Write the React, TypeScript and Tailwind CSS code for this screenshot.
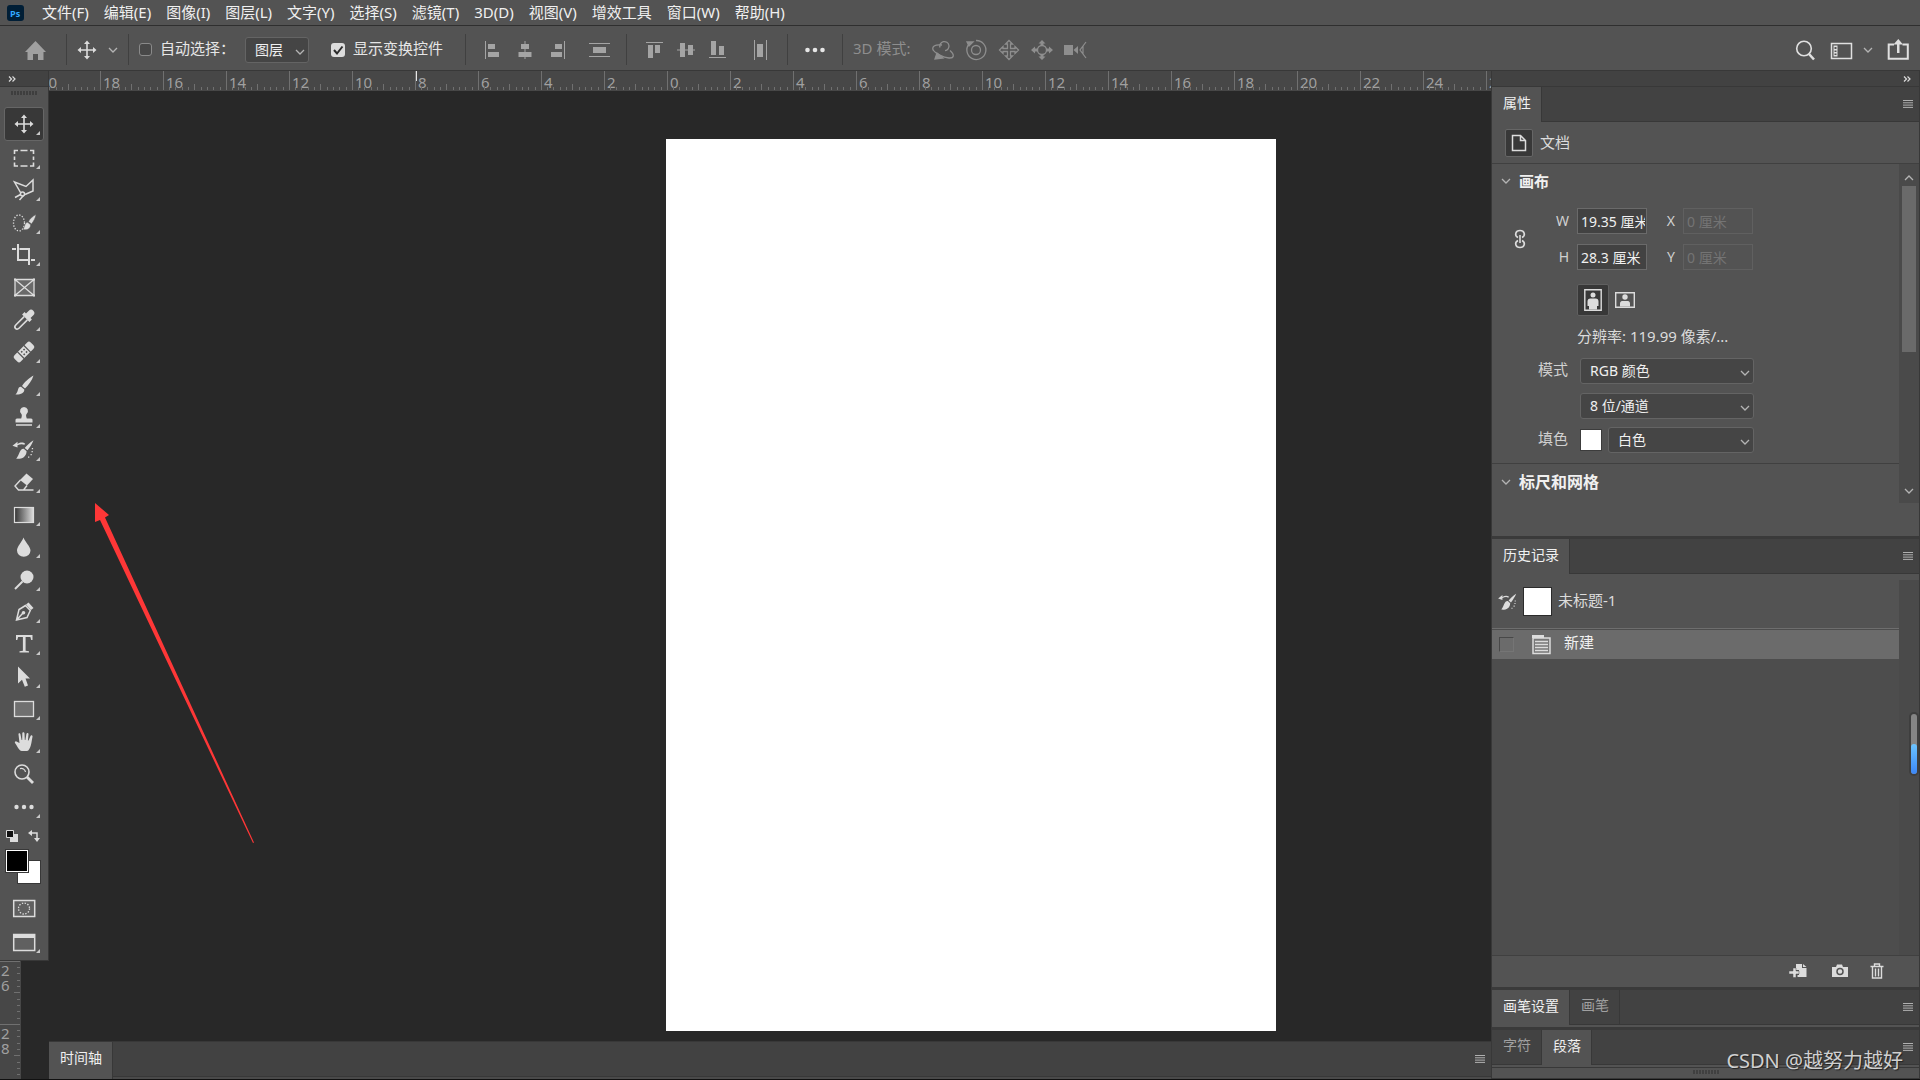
import type { ReactNode } from "react";

type Tool = { name: string; icon: ReactNode; more?: boolean };

const MENUS = [
  "文件(F)",
  "编辑(E)",
  "图像(I)",
  "图层(L)",
  "文字(Y)",
  "选择(S)",
  "滤镜(T)",
  "3D(D)",
  "视图(V)",
  "增效工具",
  "窗口(W)",
  "帮助(H)",
];

const TOP_MARKS = [20, 18, 16, 14, 12, 10, 8, 6, 4, 2, 0, 2, 4, 6, 8, 10, 12, 14, 16, 18, 20, 22, 24, 26];
const LEFT_MARKS = [26, 28];

const LIGHT = "#dcdcdc";

const moveShape = (
  <path
    d="M0-9.5 3-6H.8v5.2H6V-3L9.5 0 6 3V.8H.8V6H3L0 9.5-3 6h2.2V.8H-6V3L-9.5 0-6-3v2.2h5.2V-6H-3z"
    fill={LIGHT}
  />
);

const historyBrushShape = (
  <g fill={LIGHT}>
    <path d="M-11.5-4.2l5-4v2.1C-3.500-8-.5-7.800 1.200-6.200L.3-5.200C-1.500-6.300-4-6-6.500-4.700v2.100z" />
    <path d="M9.500-9.800C6-7.500 3-4.800.7-2l2.800 2.300C5.800-2.600 8-6 9.500-9.800zM-.2-1.200C-4.500-1.500-4 4-7.800 8.700-3 9.300 2.300 7.500 2.600 1.200z" />
    <path d="M7.500 1h1.300v1.300H7.500zM7.800-2h1.300v1.300H7.800zM6.500 4h1.300v1.300H6.500zM4 6.500h1.300v1.300H4z" />
  </g>
);

const TOOLS: Tool[] = [
  { name: "移动工具", more: true, icon: moveShape },
  {
    name: "矩形选框工具",
    more: true,
    icon: (
      <path
        d="M-9.500-4v-3.500H-6M-3.500-7.500h7M6-7.500h3.500V-4M9.500-1.500v3.500M9.500 4.500V8H6M3.500 8h-7M-6 8h-3.500V4.500M-9.500 2v-3.500"
        fill="none"
        stroke={LIGHT}
        strokeWidth="1.600"
      />
    ),
  },
  {
    name: "多边形套索工具",
    more: true,
    icon: (
      <g fill="none" stroke={LIGHT} strokeWidth="1.500">
        <path d="M-3.500 2.500-9.500-8 2-3.500 9-10v11L1 4.500M-9 7.500l5.500-3M-4.500 10l4-4.500" />
        <circle cx="-1.500" cy="4" r="2" />
      </g>
    ),
  },
  {
    name: "快速选择工具",
    more: true,
    icon: (
      <g>
        <ellipse cx="-5" cy="0" rx="5.500" ry="8" fill="none" stroke={LIGHT} strokeWidth="1.300" strokeDasharray="1.300 1.600" />
        <path
          d="M12-8.500c-3 1.500-6 4-7.500 7l3 2.500c2.200-3 4-6 4.500-9.500zM3.700-.7C.5-.5.800 4-1 6.500c4 1 7.500-.5 7.700-4.700z"
          fill={LIGHT}
          stroke="#535353"
          strokeWidth=".5"
        />
      </g>
    ),
  },
  {
    name: "裁剪工具",
    more: true,
    icon: <path d="M-6-11V5H4M7 5h4M-12-6h4M-4.500-6H5v16" fill="none" stroke={LIGHT} strokeWidth="2" />,
  },
  {
    name: "图框工具",
    icon: (
      <g stroke={LIGHT} strokeWidth="1.300" fill="#6a6a6a">
        <path d="M-9-7.500H10v16H-9zM-9-7.500 10 8.500M10-7.500-9 8.500" />
        <path d="M-10-8.500h2v2h-2zM9-8.500h2v2H9zM-10 7.500h2v2h-2zM9 7.500h2v2H9z" fill={LIGHT} stroke="none" />
      </g>
    ),
  },
  {
    name: "吸管工具",
    more: true,
    icon: (
      <g transform="rotate(45)">
        <path d="M-3.200-10a3.200 3.200 0 0 1 6.400 0V-6h2v3.500H-5.200V-6h2z" fill={LIGHT} />
        <path d="M-2.300-2.500V9C-2.300 13 2.300 13 2.300 9V-2.500" fill="none" stroke={LIGHT} strokeWidth="1.600" />
      </g>
    ),
  },
  {
    name: "污点修复画笔工具",
    more: true,
    icon: (
      <g transform="rotate(-45)">
        <rect x="-11.500" y="-4.500" width="23" height="9" rx="2.500" fill={LIGHT} />
        <path d="M-4.500-5V5M4.500-5V5" stroke="#535353" strokeWidth="1.200" />
        <path d="M-2.300-2.500h1.600v1.600h-1.600zM1-2.500h1.600v1.600H1zM-2.300 1h1.600v1.600h-1.600zM1 1h1.600v1.600H1z" fill="#535353" />
      </g>
    ),
  },
  {
    name: "画笔工具",
    more: true,
    icon: (
      <path
        d="M9.500-9.500C5-7 0-2.500-2 1l3 2.500C4.500 0 8-4.500 9.500-9.500zM-3 1.800C-7 1.800-5 6.500-8.500 9.500-3.500 9.800.5 8 .3 4.500z"
        fill={LIGHT}
      />
    ),
  },
  {
    name: "仿制图章工具",
    more: true,
    icon: (
      <path
        d="M0-10a4 4 0 0 1 2.600 7c-.8 1-.6 2 .2 4.500H7c1.200 0 1.500.8 1.500 1.800V5.500h-17V3.300c0-1 .5-1.800 1.500-1.800h4.200C-2-1-2-2-2.600-3A4 4 0 0 1 0-10zM-8 7.300H8V8.800H-8z"
        fill={LIGHT}
      />
    ),
  },
  { name: "历史记录画笔工具", more: true, icon: historyBrushShape },
  {
    name: "橡皮擦工具",
    more: true,
    icon: (
      <g>
        <path d="M2.500-8.500 9-3 3 3.500-4-2z" fill={LIGHT} />
        <path d="M-3.500-2-9 4l3.500 4h5L3 3.500M-5.500 8H9.500" fill="none" stroke={LIGHT} strokeWidth="1.400" />
      </g>
    ),
  },
  {
    name: "渐变工具",
    more: true,
    icon: (
      <g>
        <linearGradient id="gradient-tool">
          <stop offset="0" stopColor="#333" />
          <stop offset="1" stopColor="#ddd" />
        </linearGradient>
        <rect x="-9.500" y="-7.500" width="19" height="15" fill="url(#gradient-tool)" stroke={LIGHT} strokeWidth="1.200" />
      </g>
    ),
  },
  {
    name: "模糊工具",
    more: true,
    icon: <path d="M-.5-9.500C1-5 6.500-.5 6.500 3.500a6.700 6.200 0 0 1-13.500 0C-7-.5-2-5-.5-9.500z" fill={LIGHT} />,
  },
  {
    name: "减淡工具",
    more: true,
    icon: (
      <g>
        <circle cx="3" cy="-3" r="6.500" fill={LIGHT} />
        <path d="M-1.500 1.500-9 9" stroke={LIGHT} strokeWidth="2" />
      </g>
    ),
  },
  {
    name: "钢笔工具",
    more: true,
    icon: (
      <g>
        <path d="M4.500-9.500 9.500-4 7-2 2-7.500z" fill={LIGHT} />
        <path d="M1.500-6.500-5-2.500-7.500 8 3 5.500 6.300-1.500zM-7 7.500-1 1" fill="none" stroke={LIGHT} strokeWidth="1.500" />
        <circle cx="-.5" cy=".8" r="1.800" fill={LIGHT} />
      </g>
    ),
  },
  {
    name: "横排文字工具",
    more: true,
    icon: <path d="M-8-9H8.500v5H7.200L6.400-7H1.600V6.800l3.400.5V8.500H-4.500V7.300l3.400-.5V-7h-4.800l-.8 3H-8z" fill={LIGHT} />,
  },
  {
    name: "路径选择工具",
    more: true,
    icon: <path d="M-6-10.500 6 1.500H1.500L4 8.500.800 9.800-2 2.800l-4 3.700z" fill={LIGHT} />,
  },
  {
    name: "矩形工具",
    more: true,
    icon: <rect x="-9.500" y="-7.500" width="19" height="15" fill="#707070" stroke={LIGHT} strokeWidth="1.300" />,
  },
  {
    name: "抓手工具",
    more: true,
    icon: (
      <path
        d="M-4.500 1-5.500-7.500c-.2-1.500 1.700-1.600 2 0L-2.400-2h.6L-1.700-8.700c0-1.500 2.100-1.500 2.200 0L.8-2h.6l1-6c.3-1.400 2.200-1.200 2.100.2L3.900-1.400h.6L6.500-6c.6-1.200 2.300-.6 2 .8C7.500-1 7.500 5 4.500 8.200 3.500 9.300-2.500 9.500-4 8.200-6 6.500-7 3.500-9 1c-.7-1.500 1-2.500 2-1.300z"
        fill={LIGHT}
      />
    ),
  },
  {
    name: "缩放工具",
    icon: (
      <g fill="none" stroke={LIGHT}>
        <circle cx="-2" cy="-2" r="7" strokeWidth="1.600" />
        <path d="M-4-5.300C-1.500-6 1-5 1.500-2" strokeWidth="1.200" />
        <path d="M3 3l6 6" strokeWidth="2.800" />
      </g>
    ),
  },
  {
    name: "编辑工具栏",
    more: true,
    icon: (
      <g fill={LIGHT}>
        <circle cx="-7.500" cy="0" r="2.200" />
        <circle cx="0" cy="0" r="2.200" />
        <circle cx="7.500" cy="0" r="2.200" />
      </g>
    ),
  },
];

const ALIGN_X = [
  { name: "左对齐", d: "M-8-9h1V9h-1zM-5-6H2v5h-7zM-5 2H6v5H-5z" },
  { name: "水平居中对齐", d: "M-.5-9h1v3H4v5H.5v3H6.500v5H.5v2h-1V7h-6V2h6v-3H-4v-5h3.500z" },
  { name: "右对齐", d: "M7-9h1V9H7zM-2-6H5v5h-7zM-6 2H5v5H-6z" },
  { name: "水平分布", d: "M-10-7h21v1h-21zM-6-3H7v6H-6zM-10 6h21v1h-21z" },
];

const ALIGN_Y = [
  { name: "顶对齐", d: "M-8-8H9v1H-8zM-6-5h5V8h-5zM1-5h5v8H1z" },
  { name: "垂直居中对齐", d: "M-9-.5h3V-7h5v6.500h3V-5h5v4.500h2v1H7V5H2V.5h-3V7h-5V.5h-3z" },
  { name: "底对齐", d: "M-9 7H8v1H-9zM-7-9h5V5h-5zM1-4h5v9H1z" },
  { name: "垂直分布", d: "M-6-10h1v20h-1zM-3-6h6V7h-6zM6-10h1v20H6z" },
];

const MODES_3D = [
  {
    name: "环绕移动 3D 相机",
    icon: (
      <g fill="none" stroke="#8e8e8e" strokeWidth="1.300">
        <path d="M-3-2.500a4.600 4.600 0 1 1 5 3.200" />
        <path d="M-1-5C-8-6-12-3-9.500.5-7.500 3.500 0 7.500 6 8c5 .3 6-3 1-7.500" />
        <path d="M-8 9l2-6 6 5z" fill="#8e8e8e" />
      </g>
    ),
  },
  {
    name: "滚动 3D 相机",
    icon: (
      <g fill="none" stroke="#8e8e8e" strokeWidth="1.300">
        <circle cx="0" cy="0" r="4.500" />
        <path d="M-7-6A9.500 9.500 0 1 0 0-9.500" />
        <path d="M-9-8l6 0-4 4z" fill="#8e8e8e" />
      </g>
    ),
  },
  {
    name: "平移 3D 相机",
    icon: (
      <path
        d="M0-9.500 3.500-6H1.500v4.500H6v-2L9.500 0 6 3.500v-2H1.500V6h2L0 9.500-3.500 6h2V1.500H-6v2L-9.500 0-6-3.500v2h4.500V-6h-2z"
        fill="none"
        stroke="#8e8e8e"
        strokeWidth="1.300"
      />
    ),
  },
  {
    name: "滑动 3D 相机",
    icon: (
      <g>
        <circle cx="0" cy="0" r="4.500" fill="none" stroke="#8e8e8e" strokeWidth="1.300" />
        <path
          d="M0-10l3.500 3.500h-2V-4h-3v-2.500h-2zM0 10l3.500-3.500h-2V4h-3v2.500h-2zM-11 0l4-3.500v2h3v3h-3v2zM11 0 7-3.500v2H4v3h3v2z"
          fill="#8e8e8e"
        />
      </g>
    ),
  },
  {
    name: "变焦 3D 相机",
    icon: (
      <g>
        <path d="M-11-5h9V5h-9zM-1.500 0 3-4V4z" fill="#8e8e8e" />
        <path d="M11-8 5 0l6 8M8-4v8" fill="none" stroke="#8e8e8e" strokeWidth="1.200" />
      </g>
    ),
  },
];

const Chevron = ({ up }: { up?: boolean }) => (
  <svg className="h-2 w-3 shrink-0" viewBox="0 0 12 8" aria-hidden="true">
    <path d={up ? "M2 6l4-4 4 4" : "M2 2l4 4 4-4"} fill="none" stroke="#b4b4b4" strokeWidth="1.300" />
  </svg>
);

const Burger = () => (
  <button aria-label="面板菜单" className="ml-auto mr-[6px] self-center">
    <svg className="h-2 w-[10px]" viewBox="0 0 10 8" aria-hidden="true">
      <path d="M0 .5h10M0 2.800h10M0 5.100h10M0 7.400h10" stroke="#b0b0b0" />
    </svg>
  </button>
);

const Collapse = () => (
  <svg className="h-2 w-2" viewBox="0 0 8 8" aria-hidden="true">
    <path d="M1 1.500 3.500 4 1 6.500M4.500 1.500 7 4 4.500 6.500" fill="none" stroke="#dcdcdc" strokeWidth="1.200" />
  </svg>
);

const Divider = () => <span className="h-[31px] w-px shrink-0 bg-[#404040]" />;

const GlyphButton = ({ name, children }: { name: string; children: ReactNode }) => (
  <button aria-label={name} className="shrink-0">
    <svg className="h-6 w-6" viewBox="-12 -12 24 24" aria-hidden="true">
      {children}
    </svg>
  </button>
);

type AlignGroupProps = { items: { name: string; d: string }[] };

const AlignGroup = ({ items }: AlignGroupProps) => (
  <div className="mx-[15px] flex shrink-0 gap-2">
    {items.map(({ name, d }, i) => (
      <span key={name} className={i === 3 ? "ml-[10px] flex" : "flex"}>
        <GlyphButton name={name}>
          <path d={d} fill="#a4a4a4" />
        </GlyphButton>
      </span>
    ))}
  </div>
);

type DropdownProps = { label: string; value: string; className: string };

const Dropdown = ({ label, value, className }: DropdownProps) => (
  <span className={`relative flex items-center ${className}`}>
    <select
      aria-label={label}
      className="h-[26px] w-full appearance-none rounded-[3px] border border-[#646464] bg-[#454545] pl-[9px] text-sm leading-5 text-[#f0f0f0]"
    >
      <option>{value}</option>
    </select>
    <span className="pointer-events-none absolute right-[3px] flex pt-1">
      <Chevron />
    </span>
  </span>
);

type TabStripProps = { tabs: string[]; active: string };

const TabStrip = ({ tabs, active }: TabStripProps) => (
  <div role="tablist" className="flex h-[35px] shrink-0 bg-[#424242]">
    {tabs.map((tab) => (
      <button
        key={tab}
        role="tab"
        aria-selected={tab === active}
        className={
          tab === active
            ? "border-r border-[#383838] bg-[#535353] pl-[11px] pr-[10px] pb-1 text-sm text-[#f0f0f0]"
            : "border-b border-r border-[#383838] pl-[11px] pr-[10px] pb-1 text-sm text-[#a0a0a0]"
        }
      >
        {tab}
      </button>
    ))}
    <div className="flex flex-1 border-b border-[#383838]">
      <Burger />
    </div>
  </div>
);

const MenuBar = () => (
  <header className="flex h-[26px] shrink-0 items-center border-b border-[#2f2f2f] bg-[#535353] pl-[7px]">
    <svg className="mr-[18px] h-4 w-[17px]" viewBox="0 0 17 16" role="img" aria-label="Ps">
      <rect width="17" height="16" rx="3" fill="#001e36" />
      <text x="3" y="11.500" fontSize="9" fontWeight="700" fill="#31a8ff" fontFamily="Open Sans, sans-serif">
        Ps
      </text>
    </svg>
    <nav className="flex gap-[15px] pb-[2px] text-[15px] leading-5 text-[#f0f0f0]">
      {MENUS.map((menu) => (
        <button key={menu}>{menu}</button>
      ))}
    </nav>
  </header>
);

const OptionsBar = () => (
  <section
    aria-label="选项"
    className="flex h-[45px] shrink-0 items-center border-b border-[#383838] bg-[#535353] pt-[3px] text-[15px] text-[#e6e6e6]"
  >
    <button aria-label="主页" className="ml-6 mr-[19px] shrink-0">
      <svg className="h-6 w-[23px]" viewBox="0 0 23 24" aria-hidden="true">
        <path d="M11.500 3 22 14h-2.500v8H14v-6H9v6H3.500v-8H1z" fill="#a0a0a0" />
      </svg>
    </button>
    <Divider />
    <div className="ml-2 mr-[9px] flex shrink-0 items-center gap-2">
      <GlyphButton name="移动工具">{moveShape}</GlyphButton>
      <Chevron />
    </div>
    <Divider />
    <label className="ml-[10px] mr-[10px] flex shrink-0 items-center gap-2">
      <input type="checkbox" className="h-[13px] w-[13px] appearance-none rounded-[3px] border border-[#8a8a8a] bg-[#484848]" />
      <span className="pb-[2px]">自动选择：</span>
    </label>
    <Dropdown label="自动选择" value="图层" className="w-16 shrink-0" />
    <label className="mx-[22px] flex shrink-0 items-center gap-2">
      <span className="relative flex">
        <input
          type="checkbox"
          defaultChecked
          className="h-[14px] w-[14px] appearance-none rounded-[3px] bg-[#dcdcdc]"
        />
        <svg className="pointer-events-none absolute inset-0 h-[14px] w-[14px]" viewBox="0 0 14 14" aria-hidden="true">
          <path d="M3 7l3 3.500 5.500-7" fill="none" stroke="#2b2b2b" strokeWidth="2" />
        </svg>
      </span>
      <span className="pb-[2px]">显示变换控件</span>
    </label>
    <Divider />
    <AlignGroup items={ALIGN_X} />
    <Divider />
    <AlignGroup items={ALIGN_Y} />
    <Divider />
    <span className="mx-[15px] flex">
      <GlyphButton name="更多选项">
        <g fill="#e6e6e6">
          <circle cx="-7.500" cy="0" r="2.300" />
          <circle cx="0" cy="0" r="2.300" />
          <circle cx="7.500" cy="0" r="2.300" />
        </g>
      </GlyphButton>
    </span>
    <Divider />
    <span className="ml-[10px] w-[78px] shrink-0 pb-[2px] text-[#8e8e8e]">3D 模式:</span>
    <div className="flex shrink-0 gap-[9px]">
      {MODES_3D.map(({ name, icon }) => (
        <GlyphButton key={name} name={name}>
          {icon}
        </GlyphButton>
      ))}
    </div>
    <div className="ml-auto mr-[10px] flex items-center">
      <GlyphButton name="搜索">
        <circle cx="-1" cy="-1.500" r="7.300" fill="none" stroke="#e0e0e0" strokeWidth="1.600" />
        <path d="M4 4l5 5.500" stroke="#e0e0e0" strokeWidth="2.600" />
      </GlyphButton>
      <span className="ml-3 mr-[9px] flex">
        <GlyphButton name="选择工作区">
          <path d="M-9.500-6.500h20v15h-20z" fill="none" stroke="#e0e0e0" strokeWidth="1.500" />
          <path d="M-7.500-4.500h4v11h-4z" fill="#e0e0e0" />
          <path d="M-6.500-3h2v2h-2zM-6.500.5h2v1.500h-2zM-6.500 3.500h2V5h-2z" fill="#535353" />
        </GlyphButton>
      </span>
      <Chevron />
      <span className="ml-3 flex">
        <GlyphButton name="共享">
          <path d="M-4-5.500h-5.300v14.200H9.800V-5.500H4.500" fill="none" stroke="#e0e0e0" strokeWidth="2" />
          <path d="M.3-11 5-5.500H1.500V3H-1v-8.500h-3.500z" fill="#e0e0e0" />
        </GlyphButton>
      </span>
    </div>
  </section>
);

const Toolbox = () => (
  <aside aria-label="工具" className="flex w-[49px] shrink-0 flex-col bg-[#282828]">
    <div className="border-b border-r border-[#383838] bg-[#535353]">
      <div className="flex h-4 items-center border-b border-[#383838] bg-[#424242] pl-2">
        <Collapse />
      </div>
      <div className="flex h-5 justify-center gap-px pt-1">
        {Array.from({ length: 9 }, (_, i) => (
          <span key={i} className="h-1 w-[2px] bg-[#3e3e3e]" />
        ))}
      </div>
      <div className="flex h-[716px] flex-col px-1">
        {TOOLS.map(({ name, icon, more }, i) => (
          <button
            key={name}
            aria-label={name}
            className={
              i === 0
                ? "flex flex-1 items-center justify-center rounded-[3px] border border-[#666] bg-[#383838]"
                : "flex flex-1 items-center justify-center"
            }
          >
            <svg className="h-[30px] w-10 shrink-0" viewBox="-20 -15 40 30" aria-hidden="true">
              {icon}
              {more && <path d="M16 7v4h-4z" fill="#c8c8c8" />}
            </svg>
          </button>
        ))}
      </div>
      <div className="flex h-[25px] items-center justify-between pl-[6px] pr-2">
        <button aria-label="默认前景色和背景色">
          <svg className="h-3 w-3" viewBox="0 0 12 12" aria-hidden="true">
            <path d="M4 4h8v8H4z" fill={LIGHT} />
            <path d="M.5.5h7v7h-7z" fill="#111" stroke={LIGHT} />
          </svg>
        </button>
        <button aria-label="切换前景色和背景色">
          <svg className="h-3 w-3" viewBox="0 0 12 12" aria-hidden="true">
            <path d="M3 3h6v6" fill="none" stroke={LIGHT} strokeWidth="1.500" />
            <path d="M0 3l4-3v6zM6 8h6l-3 4z" fill={LIGHT} />
          </svg>
        </button>
      </div>
      <div className="relative h-11">
        <button aria-label="背景色" className="absolute left-[17px] top-3 h-6 w-6 border border-[#383838] bg-white" />
        <button
          aria-label="前景色"
          className="absolute left-[5px] top-px h-6 w-6 border border-[#383838] bg-black ring-1 ring-inset ring-white"
        />
      </div>
      <button aria-label="以快速蒙版模式编辑" className="flex h-8 w-full items-center justify-center">
        <svg className="h-[30px] w-10" viewBox="-20 -15 40 30" aria-hidden="true">
          <path d="M-10.300-7.500h21v16h-21z" fill="#606060" stroke={LIGHT} strokeWidth="1.500" />
          <circle cx="0" cy=".5" r="5.500" fill="none" stroke={LIGHT} strokeWidth="1.300" strokeDasharray="1.400 1.480" />
        </svg>
      </button>
      <button aria-label="更改屏幕模式" className="flex h-9 w-full items-center justify-center">
        <svg className="h-[30px] w-10" viewBox="-20 -15 40 30" aria-hidden="true">
          <path d="M-10.300-7.500h21v16h-21z" fill="#606060" stroke={LIGHT} strokeWidth="1.500" />
          <path d="M-11-8h22v4h-22z" fill={LIGHT} />
          <path d="M16 7v4h-4z" fill="#c8c8c8" />
        </svg>
      </button>
    </div>
    <div className="min-h-0 w-[21px] flex-1 overflow-hidden bg-[#474747] text-[15px] leading-[15px] text-[#a0a0a0]">
      {LEFT_MARKS.map((mark) => (
        <div key={mark} className="flex h-[63px] justify-between">
          <div className="w-3 pl-px pt-[2px]">
            {String(mark)
              .split("")
              .map((digit, i) => (
                <div key={i}>{digit}</div>
              ))}
          </div>
          <svg className="h-[63px] w-2 overflow-visible" viewBox="0 0 8 63" aria-hidden="true">
            <path d="M-13 .5H7M1 31.500h6" stroke="#707070" />
            <path
              d="M4 6.500h3M4 12.500h3M4 19.500h3M4 25.500h3M4 38.500h3M4 44.500h3M4 50.500h3M4 57.500h3"
              stroke="#707070"
            />
          </svg>
        </div>
      ))}
    </div>
  </aside>
);

const Ruler = () => (
  <div className="relative h-5 shrink-0 overflow-hidden bg-[#474747]">
    <div className="-ml-3 flex">
      {TOP_MARKS.map((mark, i) => (
        <div key={i} className="relative h-5 w-[63px] shrink-0 pl-[3px] pt-[3px] text-[15px] leading-4 text-[#a0a0a0]">
          <svg className="absolute inset-0 h-5 w-[63px]" viewBox="0 0 63 20" aria-hidden="true">
            <path d="M.5 0v19M31.500 13v6" stroke="#707070" />
            <path
              d="M6.500 16v3M12.500 16v3M19.500 16v3M25.500 16v3M38.500 16v3M44.500 16v3M50.500 16v3M57.500 16v3"
              stroke="#707070"
            />
          </svg>
          {mark}
        </div>
      ))}
    </div>
    <span className="absolute left-[367px] top-0 h-[10px] w-px bg-[#e6e6e6]" />
  </div>
);

const Workspace = () => (
  <main className="relative flex min-w-0 flex-1 flex-col bg-[#282828]">
    <Ruler />
    <div className="min-h-0 flex-1 overflow-hidden">
      <div className="ml-[617px] mt-12 h-[892px] w-[610px] bg-white" />
    </div>
    <section aria-label="时间轴" className="flex h-[38px] shrink-0 border-t border-[#383838] bg-[#4a4a4a]">
      <button className="border-r border-[#383838] bg-[#535353] pl-[11px] pr-[10px] pb-[6px] text-sm text-[#f0f0f0]">
        时间轴
      </button>
      <div className="mb-[2px] flex flex-1 border-b border-[#383838] bg-[#424242]">
        <Burger />
      </div>
    </section>
    {/* red pointer drawn over the canvas */}
    <svg
      className="pointer-events-none absolute left-[45px] top-[431px] h-[342px] w-[162px]"
      viewBox="0 0 162 342"
      aria-hidden="true"
    >
      <path d="M1 1l14 12-4 2.500L160 340.500l-1 .5L6 18l-5 2z" fill="#fe3737" />
    </svg>
  </main>
);

type SizeFieldProps = { id: string; value: string; disabled?: boolean };

const SizeField = ({ id, value, disabled }: SizeFieldProps) => (
  <>
    <label htmlFor={`size-${id}`} className="pr-2 text-right text-sm text-[#d0d0d0]">
      {id}
    </label>
    <input
      id={`size-${id}`}
      defaultValue={value}
      disabled={disabled}
      className={
        disabled
          ? "h-[26px] w-[70px] border border-[#606060] px-[3px] text-sm text-[#747474]"
          : "h-[26px] w-[70px] border border-[#6a6a6a] bg-[#424242] pl-[3px] pr-px text-sm text-[#f0f0f0]"
      }
    />
  </>
);

const PropertiesPanel = () => (
  <section aria-label="属性">
    <TabStrip tabs={["属性"]} active="属性" />
    <div className="flex h-[42px] items-center gap-[7px] border-b border-[#404040] pl-[13px] text-[15px] text-[#dcdcdc]">
      <span className="flex h-7 w-7 items-center justify-center rounded-[2px] border border-[#666] bg-[#383838]">
        <svg className="h-[18px] w-4" viewBox="0 0 16 18" aria-hidden="true">
          <path d="M1.500 1.500h8l5 5v10h-13zM9.500 1.500v5h5" fill="none" stroke={LIGHT} strokeWidth="1.500" />
        </svg>
      </span>
      文档
    </div>
    <div className="flex h-[372px]">
      <div className="min-w-0 flex-1">
        <h2 className="flex h-[34px] items-center gap-[7px] pl-2 text-[15px] font-bold text-[#f0f0f0]">
          <Chevron />
          画布
        </h2>
        <div className="mt-[10px] flex items-center pl-[22px]">
          <button aria-label="链接宽度和高度">
            <svg className="h-5 w-3" viewBox="0 0 12 20" aria-hidden="true">
              <path
                d="M4 8.500C0 6.500 1.500 1.500 6 1.500s6 5 2 7M4 11.500c-4 2-2.500 7 2 7s6-5 2-7M6 6v8"
                fill="none"
                stroke={LIGHT}
                strokeWidth="1.600"
              />
            </svg>
          </button>
          <div className="grid grid-cols-[51px_70px_36px_70px] items-center gap-y-[10px]">
            <SizeField id="W" value="19.35 厘米" />
            <SizeField id="X" value="0 厘米" disabled />
            <SizeField id="H" value="28.3 厘米" />
            <SizeField id="Y" value="0 厘米" disabled />
          </div>
        </div>
        <div className="ml-[85px] mt-[14px] flex items-center gap-[6px]">
          <button
            aria-label="纵向"
            className="flex h-8 w-8 items-center justify-center rounded-[2px] border border-[#606060] bg-[#383838]"
          >
            <svg className="h-[22px] w-[18px]" viewBox="0 0 18 22" aria-hidden="true">
              <path d="M.8.8h16.400v20.400H.8z" fill="none" stroke={LIGHT} strokeWidth="1.400" />
              <circle cx="9" cy="6" r="2.500" fill={LIGHT} />
              <path d="M6.500 9.500h5c2 0 3 1 3 3v4.500h-1.500v3.500h-8v-3.500H3.500v-4.500c0-2 1-3 3-3z" fill={LIGHT} />
            </svg>
          </button>
          <button aria-label="横向">
            <svg className="h-4 w-5" viewBox="0 0 20 16" aria-hidden="true">
              <path d="M.7.7h18.600v14.600H.7z" fill="none" stroke={LIGHT} strokeWidth="1.400" />
              <circle cx="10" cy="5" r="2.700" fill={LIGHT} />
              <path d="M5 14.500v-3C5 10 6 9 7 9h6c1 0 2 1 2 2.500v3z" fill={LIGHT} />
            </svg>
          </button>
        </div>
        <p className="ml-[85px] mt-2 text-[15px] leading-6 text-[#dcdcdc]">分辨率: 119.99 像素/...</p>
        <div className="mt-[10px] grid grid-cols-[76px_174px] items-center gap-x-3 gap-y-2 text-[15px] text-[#d0d0d0]">
          <span className="pb-1 text-right">模式</span>
          <Dropdown label="模式" value="RGB 颜色" className="w-full" />
          <Dropdown label="位深度" value="8 位/通道" className="col-start-2 w-full" />
          <span className="pb-1 text-right">填色</span>
          <div className="flex items-center gap-[6px]">
            <button aria-label="填充颜色" className="h-[22px] w-[22px] shrink-0 border border-[#3c3c3c] bg-white" />
            <Dropdown label="填色" value="白色" className="flex-1" />
          </div>
        </div>
        <h2 className="mt-[10px] flex h-[36px] items-center gap-[7px] border-t border-[#404040] pl-2 text-base font-bold text-[#f0f0f0]">
          <Chevron />
          标尺和网格
        </h2>
      </div>
      <div className="flex h-[339px] w-5 flex-col items-center bg-[#4a4a4a] pb-2 pt-[10px]">
        <Chevron up />
        <span className="mt-1 h-[166px] w-[14px] bg-[#6a6a6a]" />
        <span className="mt-auto">
          <Chevron />
        </span>
      </div>
    </div>
  </section>
);

const HistoryPanel = () => (
  <section aria-label="历史记录" className="flex min-h-0 flex-1 flex-col border-t-3 border-[#3a3a3a]">
    <TabStrip tabs={["历史记录"]} active="历史记录" />
    <div className="flex min-h-0 flex-1">
      <div className="flex min-w-0 flex-1 flex-col bg-[#4d4d4d] text-[15px]">
        <div className="flex h-[55px] items-center border-b border-[#6e6e6e] bg-[#535353] pl-1 text-[#dcdcdc]">
          <svg className="mt-1 h-6 w-6" viewBox="-14 -13 28 28" aria-hidden="true">
            {historyBrushShape}
          </svg>
          <span className="ml-[3px] mr-[6px] h-[29px] w-[29px] border border-[#2b2b2b] bg-white" />
          <span className="pb-[2px]">未标题-1</span>
        </div>
        <div className="mt-px flex h-[29px] items-center bg-[#6b6b6b] pl-[7px] text-[#f0f0f0]">
          <input
            type="checkbox"
            aria-label="设置历史记录画笔的源"
            className="h-[15px] w-[15px] appearance-none border border-b-[#757575] border-l-[#484848] border-r-[#757575] border-t-[#484848]"
          />
          <svg className="ml-[18px] mr-[13px] h-5 w-[19px]" viewBox="0 0 19 20" aria-hidden="true">
            <path d="M0 0h12v3H0z" fill={LIGHT} />
            <path d="M1 3h17v15.500H1z" fill="#777" stroke={LIGHT} strokeWidth="1.500" />
            <path d="M3 6.500h13M3 9.500h13M3 12.500h13M3 15.500h13" stroke={LIGHT} strokeWidth="1.300" />
          </svg>
          <span className="pb-1">新建</span>
        </div>
      </div>
      <div className="mt-[6px] w-5 bg-[#4a4a4a]" />
    </div>
    <div className="flex h-8 items-center justify-end border-t border-[#404040] pb-[2px] pr-[34px]">
      <button aria-label="从当前状态创建新文档">
        <svg className="h-4 w-[18px]" viewBox="0 0 18 16" aria-hidden="true">
          <path d="M7 1h6v4h4.500v9h-9v-2H10V7H7zM14 1l3.500 3H14z" fill={LIGHT} />
          <path d="M4 5h3v3h3v3H7v3.500H4V11H0V8h4z" fill={LIGHT} stroke="#535353" strokeWidth=".5" />
        </svg>
      </button>
      <button aria-label="创建新快照" className="ml-6 mr-5">
        <svg className="h-4 w-[18px]" viewBox="0 0 18 16" aria-hidden="true">
          <path d="M1 4h4l1-2.500h5L12 4h5v10H1z" fill={LIGHT} />
          <circle cx="9" cy="8.500" r="3" fill={LIGHT} stroke="#535353" strokeWidth="1.500" />
        </svg>
      </button>
      <button aria-label="删除当前状态">
        <svg className="h-4 w-4" viewBox="0 0 16 16" aria-hidden="true">
          <path d="M1.500 3.500h13M5.500 3V1h5v2M3.500 4v11h9V4M6.500 5.500v8M9.500 5.500v8" fill="none" stroke={LIGHT} strokeWidth="1.400" />
        </svg>
      </button>
    </div>
  </section>
);

const SidePanels = () => (
  <aside className="relative flex w-[429px] shrink-0 flex-col border-x border-[#383838] bg-[#535353]">
    <div className="flex h-4 shrink-0 items-center justify-end border-b border-[#383838] bg-[#424242] pr-2">
      <Collapse />
    </div>
    <PropertiesPanel />
    <HistoryPanel />
    <section aria-label="画笔设置" className="border-t-3 border-[#3a3a3a] pb-[2px]">
      <TabStrip tabs={["画笔设置", "画笔"]} active="画笔设置" />
    </section>
    <section aria-label="段落" className="border-t-3 border-[#3a3a3a] pb-[2px]">
      <TabStrip tabs={["字符", "段落"]} active="段落" />
    </section>
    <div className="flex h-3 justify-center gap-px border-y border-[#383838] pt-[2px]">
      {Array.from({ length: 9 }, (_, i) => (
        <span key={i} className="h-1 w-[2px] bg-[#404040]" />
      ))}
    </div>
    <div className="absolute right-[2px] top-[643px] flex h-[60px] w-[6px] flex-col justify-end rounded-full bg-[#858585] ring-2 ring-[#3e3e3e]">
      <span className="h-[30px] rounded-full bg-linear-to-b from-[#6cc4ff] to-[#3d86f5]" />
    </div>
    <p className="pointer-events-none absolute bottom-1 right-4 whitespace-nowrap text-xl leading-7 text-[#d0d0d0] text-shadow-[1px_1px_1px_#222]">
      CSDN @越努力越好
    </p>
  </aside>
);

export default function App() {
  return (
    <div className="flex h-screen flex-col overflow-hidden bg-[#282828] font-['Noto_Sans','Noto_Sans_CJK_SC',sans-serif]">
      <MenuBar />
      <OptionsBar />
      <div className="flex min-h-0 flex-1 border-b border-[#111]">
        <Toolbox />
        <Workspace />
        <SidePanels />
      </div>
    </div>
  );
}
